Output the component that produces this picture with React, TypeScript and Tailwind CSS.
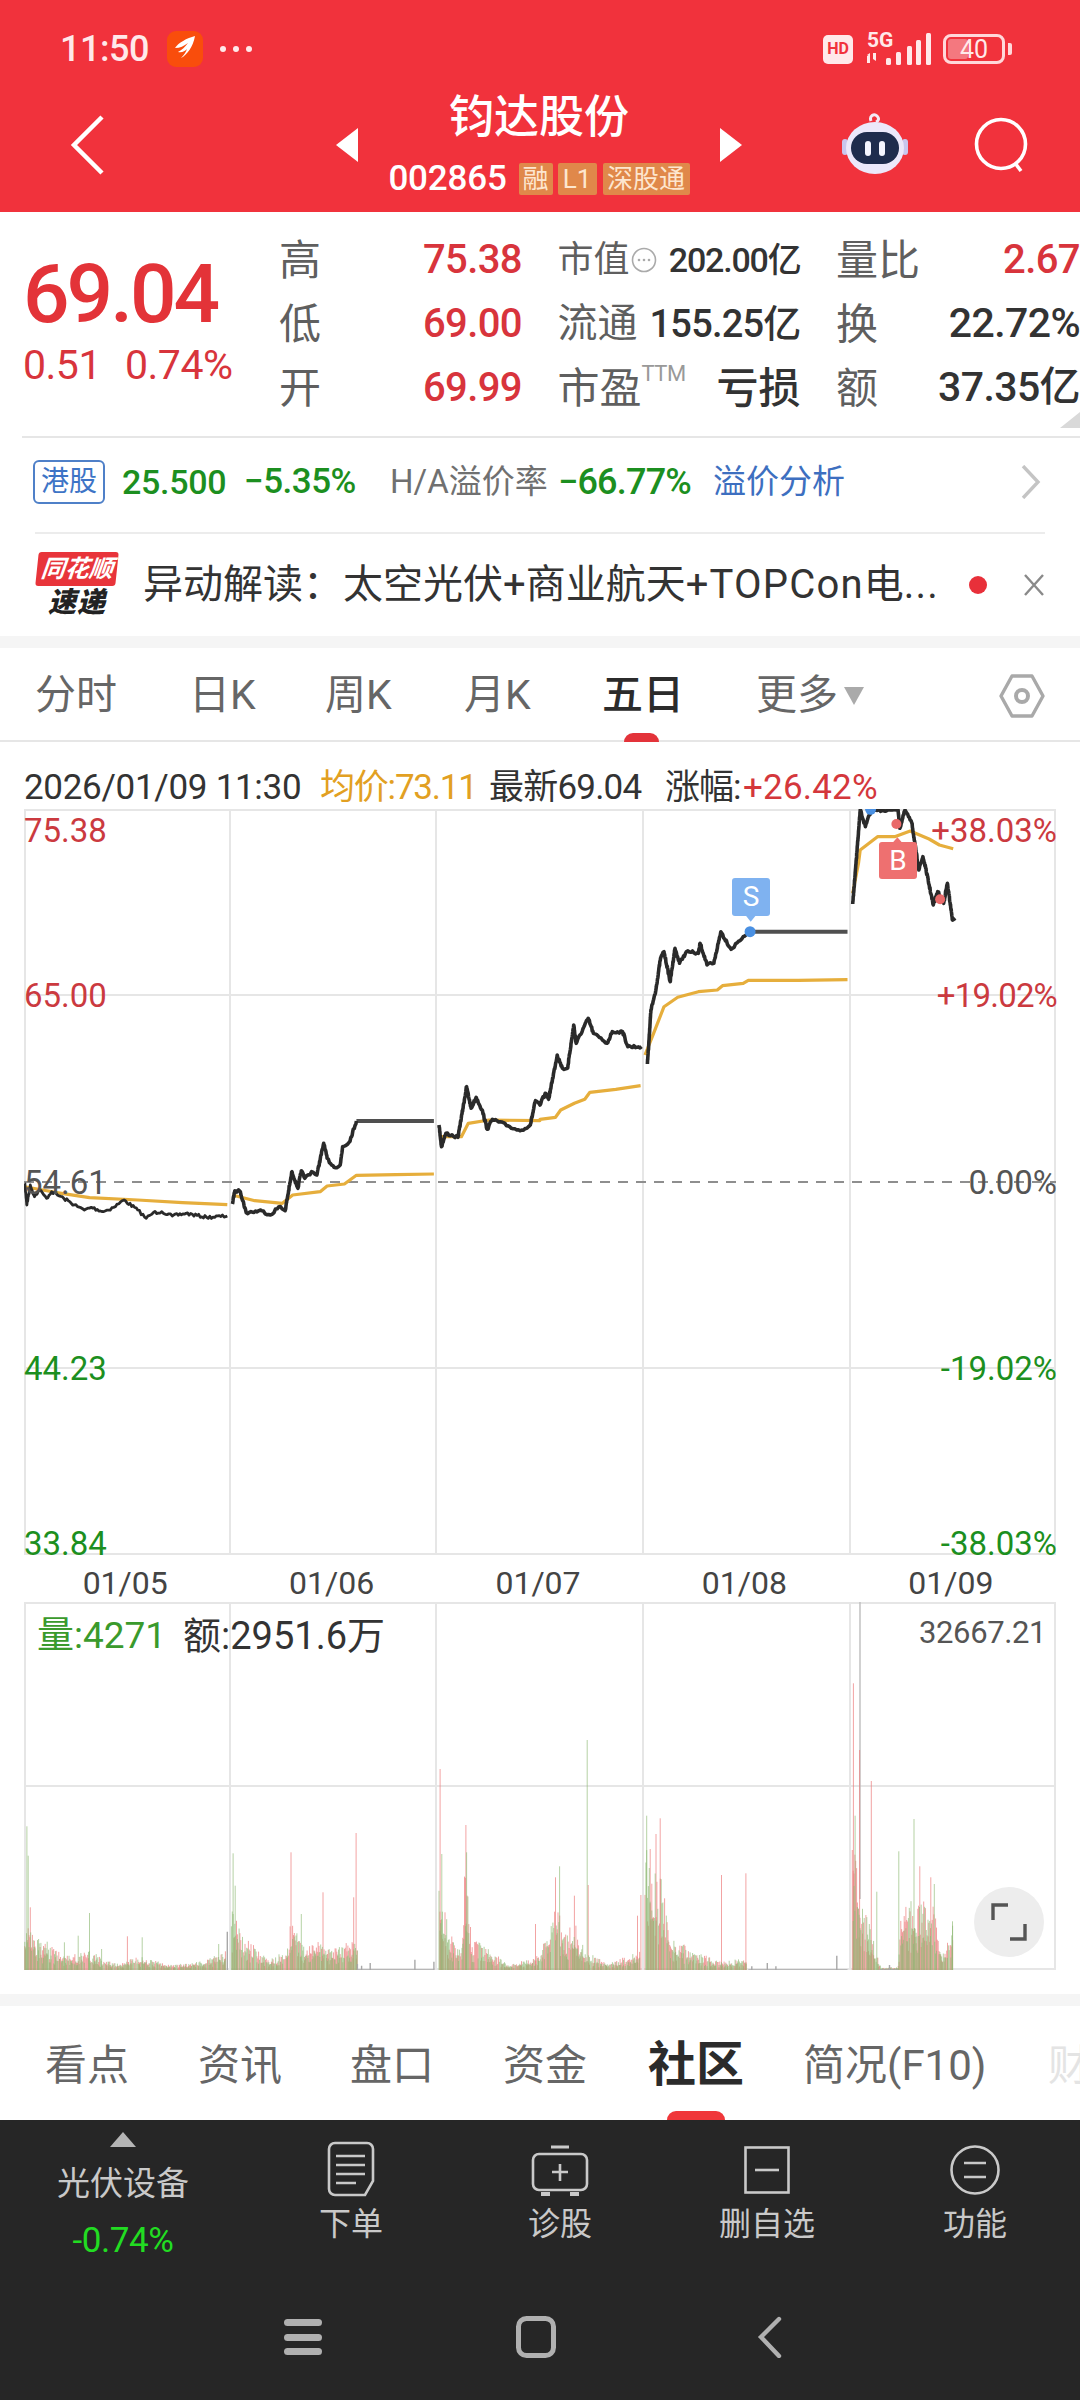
const L = (x: number) => x / 2.904;
const R = (x: number) => 540 + x / 2.904;
const PY = (y: number) => 760 + y / 3;
const VY = (y: number) => 1590 + y / 3;

type P = [number, number];

let seed = 7;
const rand = () => {
  seed = (seed * 16807) % 2147483647;
  return seed / 2147483647;
};

// points read off the reference crops, left half / right half
const line = (left: P[], right: P[] = [], jitter = 0) => {
  const pts = [...left.map(([x, y]): P => [L(x), PY(y)]), ...right.map(([x, y]): P => [R(x), PY(y)])];
  if (!jitter) return pts.map(([x, y]) => `${x.toFixed(1)},${y.toFixed(1)}`).join(" ");
  const out: string[] = [];
  pts.forEach(([x, y], i) => {
    if (i === 0) {
      out.push(`${x.toFixed(1)},${y.toFixed(1)}`);
      return;
    }
    const [px, py] = pts[i - 1];
    const steps = Math.max(1, Math.round(Math.max(Math.abs(x - px), Math.abs(y - py)) / 1.6));
    for (let s = 1; s <= steps; s++) {
      const t = s / steps;
      const n = s === steps ? 0 : (rand() - 0.5) * jitter;
      out.push(`${(px + (x - px) * t).toFixed(1)},${(py + (y - py) * t + n).toFixed(1)}`);
    }
  });
  return out.join(" ");
};

const priceLines = [
  line([[72, 1270], [78, 1335], [88, 1275], [100, 1310], [115, 1290], [135, 1315], [150, 1295], [185, 1315], [225, 1340], [245, 1350], [265, 1342], [300, 1355], [330, 1342], [360, 1320], [400, 1350], [425, 1375], [445, 1358], [470, 1355], [500, 1368], [540, 1360], [600, 1372], [660, 1368]], [], 3),
  line([[675, 1332], [682, 1292], [698, 1295], [715, 1358], [760, 1352], [785, 1365], [810, 1340], [828, 1352], [848, 1235], [865, 1285], [875, 1232], [885, 1255], [905, 1235], [920, 1245], [940, 1150], [950, 1195], [970, 1222], [988, 1215], [995, 1160], [1015, 1145], [1035, 1083]], [], 3),
  line([[1275, 1095], [1282, 1160], [1295, 1120], [1330, 1132], [1355, 980], [1368, 1045], [1383, 1012], [1400, 1050], [1415, 1108], [1430, 1078], [1480, 1100], [1510, 1112], [1540, 1095], [1555, 1022]], [[0, 1035], [15, 1000], [25, 1018], [50, 885], [65, 925], [80, 925], [98, 795], [105, 850], [140, 775], [155, 820], [195, 850], [210, 815], [240, 815], [255, 860], [295, 860]], 3),
  line([], [[312, 912], [322, 750], [335, 700], [350, 595], [360, 575], [378, 665], [392, 565], [405, 610], [425, 575], [460, 580], [465, 550], [485, 615], [505, 610], [525, 515], [555, 568], [590, 530], [610, 515]], 3),
  line([], [[908, 432], [915, 345], [930, 150], [945, 200], [960, 155], [975, 150], [1040, 150], [1045, 205], [1060, 150], [1080, 190], [1100, 330], [1112, 290], [1120, 325], [1142, 435], [1155, 395], [1172, 430], [1183, 370], [1198, 480], [1205, 482]], 3),
];

const flatLines = [
  line([[1035, 1083], [1260, 1083]]),
  line([], [[610, 515], [893, 515]]),
  line([], [[975, 149], [1040, 149]]),
];

const avgLines = [
  line([[72, 1280], [160, 1297], [260, 1313], [400, 1320], [530, 1328], [660, 1334]]),
  line([[675, 1305], [740, 1322], [820, 1330], [850, 1305], [930, 1295], [950, 1278], [1000, 1272], [1035, 1246], [1150, 1244], [1260, 1242]]),
  line([[1275, 1130], [1340, 1130], [1360, 1090], [1420, 1080], [1568, 1082]], [[0, 1078], [45, 1072], [60, 1050], [100, 1030], [130, 1018], [145, 997], [220, 988], [292, 977]]),
  line([], [[305, 885], [330, 820], [360, 740], [400, 712], [460, 695], [515, 690], [530, 677], [590, 670], [605, 661], [750, 661], [893, 659]]),
  line([], [[908, 400], [925, 310], [930, 270], [980, 230], [1030, 230], [1075, 213], [1130, 237], [1160, 255], [1200, 266]]),
];

const toReal = (left: P[], right: P[] = []): P[] => [
  ...left.map(([x, y]): P => [L(x), y]),
  ...right.map(([x, y]): P => [R(x), y]),
];

const volumeDays: P[][] = [
  toReal([[72, 1010], [110, 1060], [200, 1100], [260, 1090], [330, 1125], [410, 1105], [500, 1130], [600, 1115], [655, 1090]]),
  toReal([[672, 950], [700, 1040], [780, 1115], [830, 1090], [850, 980], [880, 1080], [930, 1060], [960, 1090], [1000, 1060], [1038, 1050]]),
  toReal([[1275, 800], [1300, 1030], [1340, 1090], [1350, 850], [1370, 1050], [1440, 1100], [1480, 1130], [1568, 1100]], [[0, 1100], [50, 950], [70, 1050], [100, 1000], [130, 1090], [200, 1125], [290, 1090]]),
  toReal([], [[305, 800], [330, 880], [350, 870], [380, 1050], [450, 1090], [520, 1120], [600, 1110]]),
  toReal([], [[907, 750], [930, 900], [975, 1090], [990, 1135], [1040, 1135], [1050, 960], [1090, 950], [1140, 960], [1170, 1100], [1200, 1010]]),
];

const redSpikes = toReal(
  [[88, 955], [100, 1055], [370, 1042], [845, 790], [938, 910], [1034, 732], [1027, 925], [1278, 540], [1353, 708], [1555, 1005]],
  [[140, 888], [45, 865], [100, 920], [293, 918], [283, 980], [349, 688], [337, 735], [320, 780], [527, 858], [598, 853], [910, 283], [928, 483], [962, 576], [1103, 832], [1135, 865]],
);
const greenSpikes = toReal(
  [[78, 712], [82, 800], [112, 1050], [137, 1058], [187, 1060], [227, 1040], [260, 972], [295, 1080], [413, 1045], [635, 1065], [677, 793], [683, 890], [875, 975], [1283, 795], [1355, 790]],
  [[137, 453], [57, 832], [310, 680], [978, 908], [915, 680], [1042, 787], [1086, 690], [1145, 885], [1198, 997]],
);
const greySpikes = toReal(
  [[660, 1028], [1075, 1122], [1205, 1112], [1260, 1118]],
  [[615, 1132], [660, 1122], [685, 1132], [862, 1100], [1015, 1128]],
);

const interp = (env: P[], x: number) => {
  for (let i = 1; i < env.length; i++) {
    if (x <= env[i][0]) {
      const t = (x - env[i - 1][0]) / (env[i][0] - env[i - 1][0]);
      return env[i - 1][1] + (env[i][1] - env[i - 1][1]) * t;
    }
  }
  return env[env.length - 1][1];
};

const bar = (x: number, zoomY: number) => `M${x.toFixed(1)} 1971V${VY(zoomY).toFixed(1)}`;

let redBars = redSpikes.map(([x, y]) => bar(x, y)).join("");
let greenBars = greenSpikes.map(([x, y]) => bar(x, y)).join("");
for (const env of volumeDays) {
  for (let x = env[0][0]; x < env[env.length - 1][0]; x += 0.85) {
    const h = 1143 - interp(env, x);
    const tall = 1143 - h * (0.45 + rand() * 0.65);
    const short = 1143 - h * (0.25 + rand() * 0.45);
    if (rand() > 0.5) {
      redBars += bar(x, tall);
      if (rand() > 0.35) greenBars += bar(x, short);
    } else {
      greenBars += bar(x, tall);
      if (rand() > 0.35) redBars += bar(x, short);
    }
  }
}
const greyBars =
  greySpikes.map(([x, y]) => bar(x, y)).join("") +
  bar(L(1038), 1125) +
  bar(L(1050), 1130) +
  `M${L(1040)} 1971H${L(1258)}M${R(605)} 1971H${R(893)}M${R(985)} 1971H${R(1040)}`;

function BackIcon() {
  return (
    <svg width="36" height="60" viewBox="0 0 36 60" fill="none">
      <path d="M32 2 4 30l28 28" transform="translate(1 0)" stroke="#fff" strokeWidth="4.5" />
    </svg>
  );
}

function Robot() {
  return (
    <svg width="66" height="62" viewBox="0 0 66 62">
      <path d="M29 9c-2-5 3-8 6-5s1 5-1 6" fill="none" stroke="#f3e9f6" strokeWidth="3" />
      <rect x="0" y="27" width="6" height="16" rx="3" fill="#c9c6ee" />
      <rect x="60" y="27" width="6" height="16" rx="3" fill="#c9c6ee" />
      <ellipse cx="33" cy="36" rx="29" ry="26" fill="#ece8fa" />
      <rect x="9" y="20" width="48" height="32" rx="16" fill="#1f2c4d" />
      <rect x="23" y="29" width="6" height="15" rx="3" fill="#f5f5ff" />
      <rect x="37" y="29" width="6" height="15" rx="3" fill="#f5f5ff" />
    </svg>
  );
}

function SignalGroup() {
  return (
    <svg width="68" height="34" viewBox="0 0 68 34" fill="#ffe9ea">
      <path d="M3 24h3v7H3zM9 21h3v8l-3-2zM6 21v4l-3-2z" />
      <rect x="22" y="26" width="5" height="7" rx="1.5" />
      <rect x="32" y="20" width="5" height="13" rx="1.5" />
      <rect x="43" y="14" width="5" height="19" rx="1.5" />
      <rect x="52" y="8" width="5" height="25" rx="1.5" />
      <rect x="62" y="1" width="5" height="32" rx="1.5" />
    </svg>
  );
}

function StatCell({ label, value, valueClass, labelClass }: { label: React.ReactNode; value: string; valueClass: string; labelClass?: string }) {
  return (
    <div className="flex items-center justify-between h-[64px] whitespace-nowrap">
      <div className={`text-[#5f5f5f] flex items-baseline ${labelClass ?? "text-[42px]"}`}>{label}</div>
      <div className={valueClass}>{value}</div>
    </div>
  );
}

const redVal = "text-[40px] font-medium text-[#d8343c] tracking-[-0.6px]";
const darkVal = "text-[38px] font-medium text-[#333] tracking-[-0.8px]";
const darkValWide = "text-[41px] font-medium text-[#333] tracking-[-0.6px]";

function DocIcon() {
  return (
    <svg width="48" height="56" viewBox="0 0 48 56" fill="none" stroke="#c9c9c9" strokeWidth="2.6">
      <path d="M8 2h32a6 6 0 0 1 6 6v32l-8 14H8a6 6 0 0 1-6-6V8a6 6 0 0 1 6-6z" />
      <path d="M9 15h29M9 24h29M9 33h29M9 42h20" />
    </svg>
  );
}

function DiagnoseIcon() {
  return (
    <svg width="58" height="52" viewBox="0 0 58 52" fill="none" stroke="#c9c9c9" strokeWidth="2.6">
      <path d="M20 2h18" strokeWidth="3" />
      <rect x="2" y="9" width="54" height="36" rx="6" />
      <path d="M29 19v17M21 27h16" />
      <path d="M10 47h9v4h-9zM39 47h9v4h-9z" fill="#c9c9c9" stroke="none" />
    </svg>
  );
}

function RemoveIcon() {
  return (
    <svg width="46" height="48" viewBox="0 0 46 48" fill="none" stroke="#c9c9c9" strokeWidth="2.6">
      <rect x="1.5" y="1.5" width="43" height="45" />
      <path d="M11 24h24" />
    </svg>
  );
}

function MenuIcon() {
  return (
    <svg width="50" height="50" viewBox="0 0 50 50" fill="none" stroke="#c9c9c9" strokeWidth="2.6">
      <circle cx="25" cy="25" r="23.5" />
      <path d="M14 18h22M14 32h22" />
    </svg>
  );
}

export default function App() {
  return (
    <div className="w-[1080px] h-[2400px] overflow-hidden bg-white flex flex-col font-['Roboto','Noto_Sans_CJK_SC',sans-serif]">
      {/* header */}
      <div className="h-[212px] bg-[#f1323c] flex flex-col shrink-0">
        <div className="h-[90px] pt-[8px] pl-[60px] flex items-center text-[#ffe9ea]">
          <span className="text-[36px] font-medium w-[107px] tracking-[-0.5px]">11:50</span>
          <span className="w-[36px] h-[36px] rounded-[9px] bg-[#f94d0c] flex items-center justify-center">
            <svg width="24" height="28" viewBox="0 0 24 28" fill="#fff">
              <path d="M22 1C14 3 5 8 2 13c5 0 9-2 13-5-3 4-6 7-10 9 4 1 7-1 9-3-1 3-3 6-6 9 6-3 12-11 14-22z" />
            </svg>
          </span>
          <span className="ml-[17px] flex gap-[7px]">
            <i className="w-[6px] h-[6px] rounded-full bg-[#ffe9ea]" />
            <i className="w-[6px] h-[6px] rounded-full bg-[#ffe9ea]" />
            <i className="w-[6px] h-[6px] rounded-full bg-[#ffe9ea]" />
          </span>
          <span className="ml-[571px] w-[30px] h-[29px] rounded-[5px] bg-[#ffe9ea] text-[#f1323c] text-[16px] font-bold flex items-center justify-center">HD</span>
          <span className="ml-[11px] w-[68px] h-[34px] relative">
            <span className="absolute left-[3px] top-[-3px] text-[21px] font-bold leading-[22px]">5G</span>
            <SignalGroup />
          </span>
          <span className="ml-[11px] w-[62px] h-[30px] rounded-[8px] border-[3px] border-[#ffd8da] relative flex items-center justify-center text-[25px] leading-none">
            <span className="absolute left-[2px] top-[2px] bottom-[2px] w-[20px] rounded-[3px] bg-[#f4787f]" />
            <span className="relative">40</span>
          </span>
          <span className="ml-[3px] w-[4px] h-[12px] rounded-r-[2px] bg-[#ffd8da]" />
        </div>
        <div className="grid grid-cols-[336px_406px_338px]">
          <div className="pl-[69px] pt-[25px]">
            <BackIcon />
          </div>
          <div className="flex justify-between">
            <div className="mt-[38px] w-0 h-0 border-y-[17px] border-y-transparent border-r-[22px] border-r-white" />
            <div className="flex flex-col items-center pt-[5px]">
              <div className="h-[46px] leading-[46px] text-[45px] font-medium text-white">钧达股份</div>
              <div className="mt-[20px] flex items-center text-white">
                <span className="text-[35px] font-medium tracking-[-0.2px] leading-[36px]">002865</span>
                <span className="ml-[12px] w-[34px] h-[32px] bg-[#e0884a] rounded-[2px] text-[#fde6cf] text-[26px] leading-[32px] text-center">融</span>
                <span className="ml-[5px] w-[39px] h-[32px] bg-[#e0884a] rounded-[2px] text-[#fde6cf] text-[26px] leading-[32px] text-center">L1</span>
                <span className="ml-[6px] w-[87px] h-[32px] bg-[#e0884a] rounded-[2px] text-[#fde6cf] text-[26px] leading-[32px] text-center whitespace-nowrap">深股通</span>
              </div>
            </div>
            <div className="mt-[38px] w-0 h-0 border-y-[17px] border-y-transparent border-l-[22px] border-l-white" />
          </div>
          <div className="pl-[100px] pt-[22px] flex items-start">
            <Robot />
            <svg className="ml-[66px] mt-[5px]" width="56" height="56" viewBox="0 0 56 56" fill="none" stroke="#fff" strokeWidth="3.6">
              <circle cx="27" cy="27" r="24.5" />
              <path d="m41 46 6 8" />
            </svg>
          </div>
        </div>
      </div>

      {/* quote */}
      <div className="relative h-[224px] shrink-0 flex pt-[16px]">
        <div className="w-[281px] pl-[23px] pt-[30px]">
          <div className="text-[82px] leading-[72px] font-medium text-[#e33338] tracking-[-3px]">69.04</div>
          <div className="mt-[15px] flex text-[41px] leading-[40px] text-[#d8343c] tracking-[-0.5px]">
            <span className="w-[102px]">0.51</span>
            <span>0.74%</span>
          </div>
        </div>
        <div className="grid grid-cols-[243px_243px_244px] gap-x-[35.5px] h-[192px]">
          <StatCell label="高" value="75.38" valueClass={redVal} />
          <StatCell
            labelClass="text-[36px]"
            label={
              <>
                市值
                <svg className="self-center ml-[1px]" width="26" height="26" viewBox="0 0 26 26" fill="#aaa">
                  <circle cx="13" cy="13" r="11.5" fill="none" stroke="#aaa" strokeWidth="1.6" />
                  <circle cx="8" cy="13" r="1.3" />
                  <circle cx="13" cy="13" r="1.3" />
                  <circle cx="18" cy="13" r="1.3" />
                </svg>
              </>
            }
            value="202.00亿"
            valueClass="text-[34px] font-medium text-[#333] tracking-[-1.2px]"
          />
          <StatCell label="量比" value="2.67" valueClass={redVal} />
          <StatCell label="低" value="69.00" valueClass={redVal} />
          <StatCell labelClass="text-[40px]" label="流通" value="155.25亿" valueClass={darkVal} />
          <StatCell label="换" value="22.72%" valueClass={darkValWide} />
          <StatCell label="开" value="69.99" valueClass={redVal} />
          <StatCell
            label={
              <>
                市盈
                <span className="text-[22px] text-[#999] self-start leading-[34px] tracking-[-0.5px]">TTM</span>
              </>
            }
            value="亏损"
            valueClass="text-[42px] font-medium text-[#333]"
          />
          <StatCell label="额" value="37.35亿" valueClass={darkValWide} />
        </div>
        <div className="absolute right-0 bottom-[8px] w-0 h-0 border-b-[16px] border-b-[#d9d9d9] border-l-[20px] border-l-transparent" />
      </div>

      {/* H share row */}
      <div className="ml-[22px] border-t-2 border-[#e6e6e6] h-[96px] flex items-center pl-[11px] pb-[6px] shrink-0 whitespace-nowrap">
        <span className="w-[72px] h-[44px] shrink-0 rounded-[6px] border-2 border-[#4f80c8] text-[#3d74c6] text-[28px] flex items-center justify-center">港股</span>
        <span className="ml-[17px] w-[122px] shrink-0 text-[34px] text-[#1c8f20] font-medium tracking-[-0.3px]">25.500</span>
        <span className="w-[146px] shrink-0 text-[35px] text-[#1c8f20] font-medium tracking-[-0.5px]">−5.35%</span>
        <span className="w-[168px] shrink-0 text-[33px] text-[#707070]">H/A溢价率</span>
        <span className="w-[155px] shrink-0 text-[36px] text-[#1c8f20] font-medium tracking-[-0.8px]">−66.77%</span>
        <span className="w-[307px] shrink-0 text-[33px] text-[#3d6fc0]">溢价分析</span>
        <svg className="shrink-0" width="22" height="34" viewBox="0 0 22 34" fill="none" stroke="#c4c4c4" strokeWidth="3.4">
          <path d="m3 1 15 16L3 33" />
        </svg>
      </div>

      {/* news */}
      <div className="mx-[35px] border-t-2 border-[#ececec] h-[104px] flex items-center shrink-0 whitespace-nowrap">
        <div className="w-[82px] h-[66px] ml-[1px] flex flex-col items-center">
          <div className="w-[80px] h-[34px] bg-[#e8343a] rounded-[3px] -skew-x-6 text-white text-[24px] leading-[34px] text-center italic font-bold">同花顺</div>
          <div className="mt-[2px] text-[#222] text-[28px] leading-[30px] italic font-black tracking-[1px]">速递</div>
        </div>
        <span className="ml-[25px] w-[800px] text-[40px] text-[#333] overflow-hidden">
          异动解读：太空光伏+商业航天<span className="tracking-[1.2px]">+TOPCon</span>电<span className="tracking-[1.2px]">...</span>
        </span>
        <span className="ml-[26px] w-[18px] h-[18px] rounded-full bg-[#e8303a] shrink-0" />
        <svg className="ml-[36px] shrink-0" width="22" height="22" viewBox="0 0 22 22" fill="none" stroke="#8a8a8a" strokeWidth="2.4">
          <path d="m2 1 18 20M20 1 2 21" />
        </svg>
      </div>

      <div className="h-[12px] bg-[#f5f5f5] shrink-0" />

      {/* period tabs */}
      <div className="relative h-[94px] border-b-2 border-[#e6e6e6] flex items-center pl-[35px] pt-[4px] text-[41px] text-[#666] shrink-0 whitespace-nowrap">
        <span className="w-[154px] shrink-0">分时</span>
        <span className="w-[136px] shrink-0">日K</span>
        <span className="w-[139px] shrink-0">周K</span>
        <span className="w-[138px] shrink-0">月K</span>
        <span className="w-[154px] shrink-0 text-[#2b2b2b] font-medium">五日</span>
        <span className="w-[88px] shrink-0">更多</span>
        <span className="w-0 h-0 border-x-[10px] border-x-transparent border-t-[18px] border-t-[#aaa]" />
        <svg className="ml-[135px]" width="46" height="44" viewBox="0 0 46 44" fill="none" stroke="#a9a9a9" strokeWidth="3.4">
          <path d="M13 2h20l11 20-11 20H13L2 22z" strokeLinejoin="round" />
          <circle cx="23" cy="22" r="6" strokeWidth="4" />
        </svg>
        <span className="absolute left-[624px] bottom-[-2px] w-[35px] h-[9px] rounded-t-full rounded-b-[3px] bg-[#e3333a]" />
      </div>

      {/* tick info */}
      <div className="h-[67px] pl-[24px] pt-[25px] flex items-center text-[35px] text-[#333] whitespace-nowrap shrink-0">
        <span className="w-[296px] shrink-0 tracking-[-0.3px]">2026/01/09 11:30</span>
        <span className="w-[169px] shrink-0 text-[#e2a022] tracking-[-1.2px]">均价:73.11</span>
        <span className="w-[176px] shrink-0 tracking-[-0.8px]">最新69.04</span>
        <span className="w-[78px] shrink-0 tracking-[-1px]">涨幅:</span>
        <span className="text-[#d4373c] tracking-[0.2px]">+26.42%</span>
      </div>

      {/* price chart */}
      <div className="relative mx-[24px] h-[746px] shrink-0">
        <svg className="absolute inset-0" width="1032" height="746" viewBox="24 809 1032 746" fill="none">
          <g stroke="#e6e6e6" strokeWidth="2">
            <path d="M24 810H1056M24 995H1056M24 1368H1056M24 1554H1056M25 809V1555M230 809V1555M436 809V1555M643 809V1555M850 809V1555M1055 809V1555" />
          </g>
          <path d="M24 1182H1056" stroke="#8e8e8e" strokeWidth="2" strokeDasharray="10 8" />
          {avgLines.map((p, i) => (
            <polyline key={i} points={p} stroke="#e6ae3c" strokeWidth="3.2" strokeLinejoin="round" />
          ))}
          {flatLines.map((p, i) => (
            <polyline key={i} points={p} stroke="#4f4f4f" strokeWidth="4" />
          ))}
          {priceLines.map((p, i) => (
            <polyline key={i} points={p} stroke="#2a2a2a" strokeWidth={i === 0 ? 2.8 : 3.6} strokeLinejoin="round" />
          ))}
          <circle cx={R(610)} cy={PY(515)} r="5.5" fill="#4a90e2" />
          <circle cx={R(960)} cy={PY(148)} r="5.5" fill="#4a90e2" />
          <circle cx={R(1035)} cy={PY(192)} r="5" fill="#e96a6a" />
          <circle cx={R(1162)} cy={PY(418)} r="5" fill="#e96a6a" />
          <path d={`M${R(598)} ${PY(467)}L${R(612)} ${PY(485)}L${R(626)} ${PY(467)}z`} fill="#7fb2f0" />
          <path d={`M${R(1024)} ${PY(248)}L${R(1038)} ${PY(232)}L${R(1052)} ${PY(248)}z`} fill="#ee7070" />
        </svg>

        <span className="absolute left-0 top-[3px] text-[33px] leading-[38px] text-[#cb3a3f]">75.38</span>
        <span className="absolute left-0 top-[168px] text-[33px] leading-[38px] text-[#cb3a3f]">65.00</span>
        <span className="absolute left-0 top-[355px] text-[33px] leading-[38px] text-[#555]">54.61</span>
        <span className="absolute left-0 top-[541px] text-[33px] leading-[38px] text-[#1c8f20]">44.23</span>
        <span className="absolute left-0 top-[716px] text-[33px] leading-[38px] text-[#1c8f20]">33.84</span>
        <span className="absolute right-[-1px] top-[3px] text-[33px] leading-[38px] text-[#cb3a3f]">+38.03%</span>
        <span className="absolute right-[-1px] top-[168px] text-[33px] leading-[38px] text-[#cb3a3f] tracking-[-0.8px]">+19.02%</span>
        <span className="absolute right-[-1px] top-[355px] text-[33px] leading-[38px] text-[#555]">0.00%</span>
        <span className="absolute right-[-1px] top-[541px] text-[33px] leading-[38px] text-[#1c8f20]">-19.02%</span>
        <span className="absolute right-[-1px] top-[716px] text-[33px] leading-[38px] text-[#1c8f20]">-38.03%</span>

        <span className="absolute left-[708px] top-[69px] w-[38px] h-[38px] rounded-[3px] bg-[#7fb2f0] text-white text-[28px] leading-[38px] text-center">S</span>
        <span className="absolute left-[855px] top-[33px] w-[38px] h-[37px] rounded-[3px] bg-[#ee7070] text-white text-[28px] leading-[37px] text-center">B</span>
      </div>

      {/* dates */}
      <div className="ml-[22px] mr-[26px] h-[47px] pt-[4px] grid grid-cols-5 text-center items-center text-[32px] text-[#444] shrink-0">
        <span>01/05</span>
        <span>01/06</span>
        <span>01/07</span>
        <span>01/08</span>
        <span>01/09</span>
      </div>

      {/* volume chart */}
      <div className="relative mx-[24px] h-[368px] shrink-0">
        <svg className="absolute inset-0" width="1032" height="368" viewBox="24 1603 1032 368" fill="none">
          <path d="M24 1604H1056M24 1787H1056M24 1970H1056M25 1603V1971M230 1603V1971M436 1603V1971M643 1603V1971M850 1603V1971M1055 1603V1971" stroke="#e6e6e6" strokeWidth="2" />
          <path d="M860 1603V1900" stroke="#bdbdbd" strokeWidth="1.4" />
          <path d={redBars} stroke="#ec7c7c" strokeOpacity="0.7" strokeWidth="1" />
          <path d={greenBars} stroke="#8db873" strokeOpacity="0.65" strokeWidth="1" />
          <path d={greyBars} stroke="#a8a8a8" strokeWidth="1.4" />
        </svg>
        <div className="absolute left-[13px] top-[14px] flex leading-[40px] whitespace-nowrap">
          <span className="w-[146px] shrink-0 text-[37px] text-[#3a9a2c]">量:4271</span>
          <span className="text-[38px] text-[#333]">额:2951.6万</span>
        </div>
        <span className="absolute right-[10px] top-[12px] text-[31px] leading-[38px] text-[#555] tracking-[-0.4px]">32667.21</span>
        <div className="absolute left-[950px] top-[285px] w-[70px] h-[70px] rounded-full bg-[#ededed] flex items-center justify-center">
          <svg width="36" height="38" viewBox="0 0 36 38" fill="none" stroke="#555" strokeWidth="3.4">
            <path d="M17 2H2v15M19 36h15V21" />
          </svg>
        </div>
      </div>

      <div className="h-[24px] shrink-0" />
      <div className="h-[12px] bg-[#f5f5f5] shrink-0" />

      {/* info tabs */}
      <div className="relative h-[114px] flex items-center pl-[45px] pt-[4px] text-[42px] text-[#666] shrink-0 whitespace-nowrap overflow-hidden">
        <span className="w-[153px] shrink-0">看点</span>
        <span className="w-[152px] shrink-0">资讯</span>
        <span className="w-[153px] shrink-0">盘口</span>
        <span className="w-[145px] shrink-0">资金</span>
        <span className="w-[155px] shrink-0 text-[48px] font-bold text-[#2b2b2b]">社区</span>
        <span className="w-[245px] shrink-0">简况(F10)</span>
        <span className="shrink-0 text-[#e4e4e4]">财务</span>
        <span className="absolute left-[667px] bottom-0 w-[58px] h-[9px] rounded-t-full bg-[#f0373a]" />
      </div>

      {/* bottom bar */}
      <div className="flex-1 bg-[#262626] flex flex-col">
        <div className="h-[157px] grid grid-cols-[246px_210px_208px_206px_210px] text-[32px] text-[#c9c9c9] whitespace-nowrap">
          <div className="flex flex-col items-center pt-[12px]">
            <span className="w-0 h-0 border-x-[13px] border-x-transparent border-b-[15px] border-b-[#b5b5b5]" />
            <span className="mt-[17px] text-[33px] leading-[40px]">光伏设备</span>
            <span className="mt-[17px] text-[35px] leading-[40px] text-[#22dc22] tracking-[-0.4px]">-0.74%</span>
          </div>
          <div className="flex flex-col items-center">
            <div className="h-[82px] flex items-end pb-[5px]"><DocIcon /></div>
            <span className="leading-[40px] mt-[2px]">下单</span>
          </div>
          <div className="flex flex-col items-center">
            <div className="h-[82px] flex items-end pb-[5px]"><DiagnoseIcon /></div>
            <span className="leading-[40px] mt-[2px]">诊股</span>
          </div>
          <div className="flex flex-col items-center">
            <div className="h-[82px] flex items-end pb-[8px]"><RemoveIcon /></div>
            <span className="leading-[40px] mt-[2px]">删自选</span>
          </div>
          <div className="flex flex-col items-center">
            <div className="h-[82px] flex items-end pb-[7px]"><MenuIcon /></div>
            <span className="leading-[40px] mt-[2px]">功能</span>
          </div>
        </div>
        <div className="flex-1 flex items-center pl-[284px] pb-[4px]">
          <svg width="38" height="36" viewBox="0 0 38 36" fill="#b0b0b0">
            <rect width="38" height="7" rx="3.5" />
            <rect y="15" width="38" height="7" rx="3.5" />
            <rect y="29" width="38" height="7" rx="3.5" />
          </svg>
          <svg className="ml-[194px]" width="40" height="42" viewBox="0 0 40 42" fill="none" stroke="#b0b0b0" strokeWidth="5">
            <rect x="2.5" y="2.5" width="35" height="37" rx="8" />
          </svg>
          <svg className="ml-[201px]" width="25" height="42" viewBox="0 0 25 42" fill="none" stroke="#b0b0b0" strokeWidth="4.4" strokeLinecap="round">
            <path d="M22 3 4 21l18 19" />
          </svg>
        </div>
      </div>
    </div>
  );
}
